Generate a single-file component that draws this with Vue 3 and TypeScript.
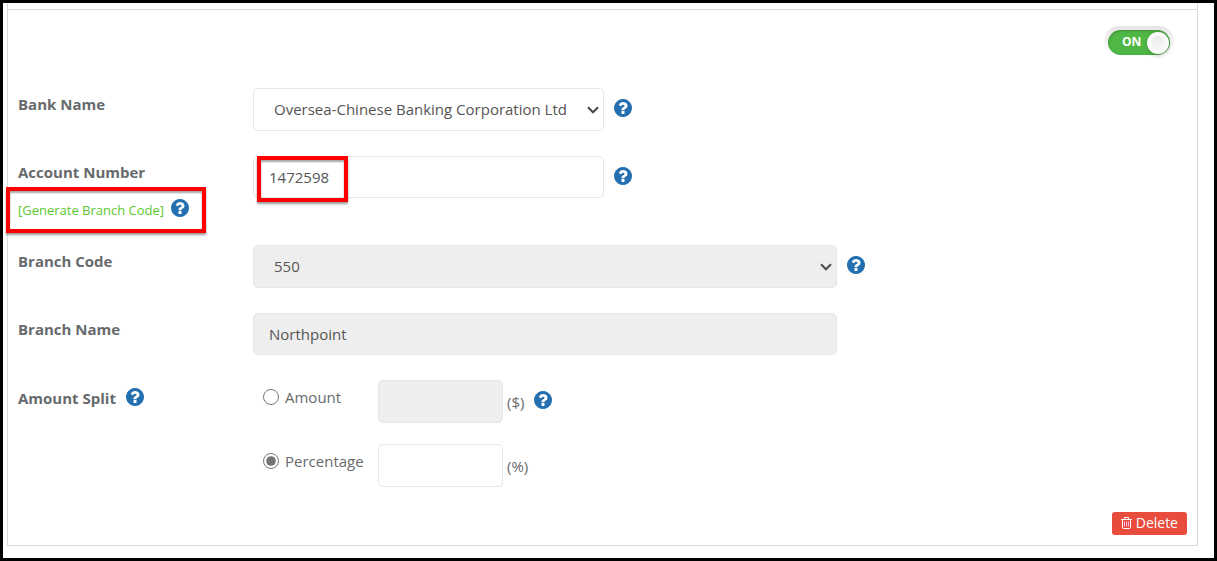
<script setup lang="ts">
import { ref, h, type FunctionalComponent } from 'vue'

const enabled = ref(true)
const bank = ref('Oversea-Chinese Banking Corporation Ltd')
const accountNumber = ref('1472598')
const branchCode = ref('550')
const branchName = ref('Northpoint')
const split = ref<'amount' | 'percentage'>('percentage')
const amount = ref('')
const percentage = ref('')

const questionPath =
  'M1024 1376v-192q0-14-9-23t-23-9h-192q-14 0-23 9t-9 23v192q0 14 9 23t23 9h192q14 0 23-9t9-23zm256-672q0-88-55.5-163t-138.5-116-170-41q-243 0-371 213-15 24 8 42l132 100q7 6 19 6 16 0 25-12 53-68 86-92 34-24 86-24 48 0 85.5 26t37.5 59q0 38-20 61t-68 45q-63 28-115.5 86.5t-52.5 125.5v36q0 14 9 23t23 9h192q14 0 23-9t9-23q0-19 21.5-49.5t54.5-49.5q32-18 49-28.5t46-35 44.5-48 28-60.5 12.5-81zm384 192q0 209-103 385.5t-279.5 279.5-385.5 103-385.5-103-279.5-279.5-103-385.5 103-385.5 279.5-279.5 385.5-103 385.5 103 279.5 279.5 103 385.5z'

const HelpIcon: FunctionalComponent = () =>
  h('svg', { viewBox: '128 128 1536 1536', width: 18, height: 18, fill: '#236fb0', 'aria-hidden': 'true' }, [
    h('path', { d: questionPath }),
  ])
</script>

<template>
  <main class="frame">
    <section class="panel">
      <div class="strip"></div>
      <form class="body" @submit.prevent>
        <div class="toggle-row">
          <label class="toggle">
            <input v-model="enabled" type="checkbox" role="switch" aria-label="Bank account enabled" />
            <span class="track" :class="{ off: !enabled }">
              <span class="state">{{ enabled ? 'ON' : 'OFF' }}</span>
              <span class="knob"></span>
            </span>
          </label>
        </div>

        <div class="row">
          <div class="caption"><label for="bank">Bank Name</label></div>
          <div class="field">
            <div class="picker medium">
              <select id="bank" v-model="bank" class="control">
                <option>Oversea-Chinese Banking Corporation Ltd</option>
              </select>
              <svg class="chevron" viewBox="0 0 12 8" width="12" height="8" aria-hidden="true">
                <path d="M1 1.3 6 6.3 11 1.3" />
              </svg>
            </div>
            <button type="button" class="help" aria-label="Help: bank name"><HelpIcon /></button>
          </div>
        </div>

        <div class="row account">
          <div class="caption">
            <label for="account">Account Number</label>
            <div class="generate">
              <a href="#">[Generate Branch Code]</a>
              <button type="button" class="help" aria-label="Help: generate branch code"><HelpIcon /></button>
            </div>
          </div>
          <div class="field marked">
            <input id="account" v-model="accountNumber" type="text" class="control medium" />
            <button type="button" class="help" aria-label="Help: account number"><HelpIcon /></button>
          </div>
        </div>

        <div class="row">
          <div class="caption"><label for="code">Branch Code</label></div>
          <div class="field">
            <div class="picker wide">
              <select id="code" v-model="branchCode" class="control" disabled>
                <option>550</option>
              </select>
              <svg class="chevron" viewBox="0 0 12 8" width="12" height="8" aria-hidden="true">
                <path d="M1 1.3 6 6.3 11 1.3" />
              </svg>
            </div>
            <button type="button" class="help" aria-label="Help: branch code"><HelpIcon /></button>
          </div>
        </div>

        <div class="row">
          <div class="caption"><label for="branch">Branch Name</label></div>
          <div class="field">
            <input id="branch" v-model="branchName" type="text" class="control wide" disabled />
          </div>
        </div>

        <div class="row" role="radiogroup" aria-labelledby="split-label">
          <div class="caption inline">
            <span id="split-label">Amount Split</span>
            <button type="button" class="help" aria-label="Help: amount split"><HelpIcon /></button>
          </div>
          <div class="splits">
            <div class="field">
              <label class="choice"><input v-model="split" type="radio" name="split" value="amount" />Amount</label>
              <input v-model="amount" type="text" class="control small" aria-label="Amount in dollars" :disabled="split !== 'amount'" />
              <span class="unit">($)</span>
              <button type="button" class="help" aria-label="Help: split amount"><HelpIcon /></button>
            </div>
            <div class="field">
              <label class="choice"><input v-model="split" type="radio" name="split" value="percentage" />Percentage</label>
              <input v-model="percentage" type="text" class="control small" aria-label="Percentage" :disabled="split !== 'percentage'" />
              <span class="unit">(%)</span>
            </div>
          </div>
        </div>

        <div class="actions">
          <button type="button" class="delete">
            <svg viewBox="0 0 11 12" width="11" height="12" fill="none" stroke="currentColor" aria-hidden="true">
              <path d="M0 2.5h11M3.5 2.5v-2h4v2M1.5 2.5v8q0 1 1 1h6q1 0 1-1v-8" />
              <path d="M3.5 4.5v5M5.5 4.5v5M7.5 4.5v5" stroke="#ffb9ef" />
            </svg>
            Delete
          </button>
        </div>
      </form>
    </section>
  </main>
</template>

<style>
body {
  margin: 0;
  background: #fff;
}
</style>

<style scoped>
*,
*::after {
  box-sizing: border-box;
}
.frame {
  min-height: 100vh;
  padding: 0 16px 12px 4px;
  border: 3px solid #000;
  background: #fff;
  color: #676a6c;
  font: 15px/20px "Open Sans", sans-serif;
}
.panel {
  border: 1px solid #d9d9db;
  border-top: 0;
}
.strip {
  height: 7px;
  border-bottom: 1px solid #dcd9dc;
}
.body {
  padding: 16px 10px 10px;
}
.toggle-row {
  display: flex;
  justify-content: flex-end;
  padding-right: 13px;
  margin-bottom: 32px;
}
.toggle {
  position: relative;
  display: block;
  width: 70px;
  height: 30px;
  padding: 4px;
  border-radius: 15px;
  background: linear-gradient(#e6e6e6, #fff);
  cursor: pointer;
}
.toggle input {
  position: absolute;
  inset: 0;
  width: 100%;
  height: 100%;
  margin: 0;
  opacity: 0;
}
.track {
  display: flex;
  align-items: center;
  justify-content: space-between;
  height: 25px;
  padding: 0 1px 0 14px;
  border-radius: 13px;
  background: #4fb845;
  box-shadow: inset 0 1px 3px rgba(0, 0, 0, 0.25);
}
.track.off {
  background: #aaa;
}
.state {
  padding-bottom: 2px;
  color: #fff;
  font-size: 12px;
  font-weight: 700;
}
.knob {
  width: 22px;
  height: 22px;
  border: 4px solid #fafafa;
  border-radius: 50%;
  background: linear-gradient(#ebebeb, #f8f8f8);
  box-shadow: 0 2px 4px rgba(0, 0, 0, 0.2);
}
.row {
  display: grid;
  grid-template-columns: 235px 1fr;
  align-items: start;
  margin-bottom: 25px;
}
.account {
  margin-bottom: 24px;
}
.caption {
  padding-top: 6px;
  font-weight: 700;
}
.caption label {
  display: block;
}
.inline {
  display: flex;
  gap: 10px;
  padding-top: 8px;
}
.generate {
  position: relative;
  display: flex;
  align-items: flex-start;
  gap: 7px;
  width: max-content;
  height: 22px;
  margin-top: 17px;
  font-weight: 400;
}
.generate a {
  padding-top: 1px;
  color: #5cc82d;
  font-size: 13px;
  text-decoration: none;
}
.generate::after,
.marked::after {
  content: "";
  position: absolute;
  border: 4px solid #f00;
  box-shadow: 0 2px 2px rgba(0, 0, 0, 0.4), inset 0 2px 2px rgba(0, 0, 0, 0.35);
  pointer-events: none;
}
.generate::after {
  inset: -12px -17px -12px -12px;
}
.marked::after {
  top: 0;
  left: 4px;
  width: 91px;
  height: 46px;
}
.field {
  position: relative;
  display: flex;
  align-items: center;
}
.control {
  height: 42px;
  padding: 6px 15px;
  border: 1px solid #e5e6e7;
  border-radius: 5px;
  outline: 0;
  background: #fff;
  color: #555;
  font: inherit;
}
.picker {
  position: relative;
}
select.control {
  display: block;
  width: 100%;
  height: 43px;
  padding: 6px 24px 7px 20px;
  appearance: none;
}
.chevron {
  position: absolute;
  top: 18px;
  right: 5px;
  fill: none;
  stroke: #4a4a4a;
  stroke-width: 2;
  pointer-events: none;
}
.control:disabled {
  background: #eee;
  opacity: 1;
}
.medium {
  width: 351px;
}
.wide {
  width: 584px;
}
input.small {
  width: 125px;
  height: 43px;
}
.help {
  display: block;
  flex: none;
  width: 18px;
  height: 18px;
  padding: 0;
  border: 0;
  border-radius: 50%;
  background: none;
  cursor: pointer;
}
.help svg {
  display: block;
}
.field .help {
  margin: 0 0 3px 10px;
}
.splits {
  display: grid;
  gap: 21px;
}
.choice {
  display: flex;
  align-items: center;
  width: 125px;
  padding: 0 0 10px 10px;
}
.choice input {
  width: 16px;
  height: 16px;
  margin: 0 6px 0 0;
  accent-color: #757575;
}
.unit {
  margin-left: 4px;
}
.actions {
  display: flex;
  justify-content: flex-end;
}
.delete {
  display: flex;
  align-items: center;
  gap: 4px;
  height: 23px;
  padding: 0 9px 2px;
  border: 0;
  border-radius: 3px;
  background: #e74c3c;
  color: #fff;
  font: 14px/20px "Open Sans", sans-serif;
  cursor: pointer;
}
</style>
